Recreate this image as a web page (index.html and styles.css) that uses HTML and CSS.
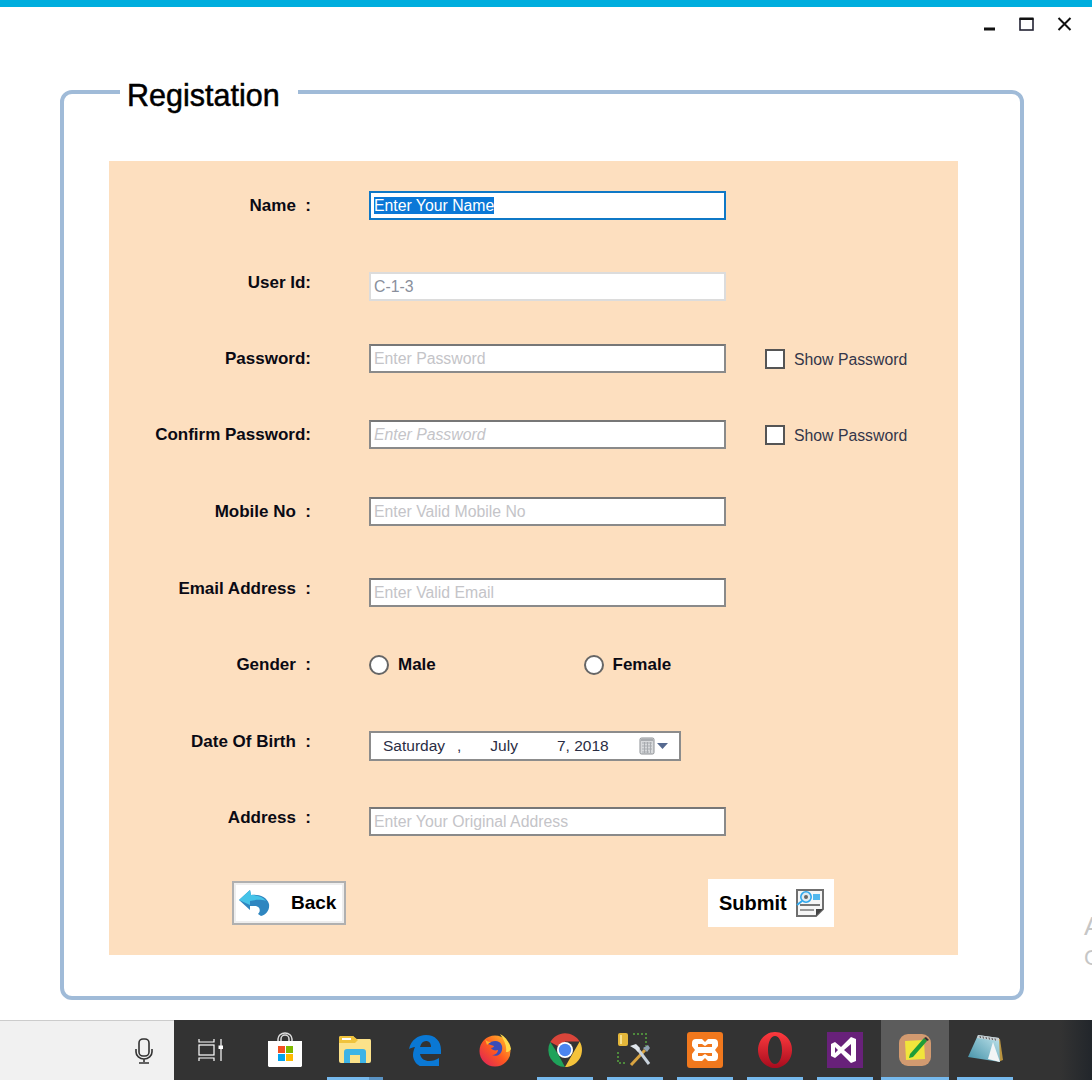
FILE: index.html
```html
<!DOCTYPE html>
<html lang="en">
<head>
<meta charset="utf-8">
<title>Registation</title>
<link rel="stylesheet" href="styles.css">
</head>
<body>
<div class="screen">
  <div class="accent"></div>
  <div class="controls">
    <svg class="ctl ctl-min" width="12" height="4" viewBox="0 0 12 4"><rect width="11" height="3" x="1" y="0.5" fill="#111"/></svg>
    <svg class="ctl ctl-max" width="15" height="14" viewBox="0 0 15 14"><rect x="1" y="2" width="13" height="11" fill="none" stroke="#223" stroke-width="1.6"/><rect x="0.5" y="0.5" width="14" height="2.5" fill="#111"/></svg>
    <svg class="ctl ctl-close" width="15" height="14" viewBox="0 0 15 14"><path d="M1.5 1 L13.5 13 M13.5 1 L1.5 13" stroke="#111" stroke-width="2" fill="none"/></svg>
  </div>
  <main class="main">
    <fieldset class="group">
      <legend class="legend">Registation</legend>
      <form class="panel">
        <div class="row">
          <div class="label">Name&nbsp; :</div>
          <div class="field field-focus"><span class="selected">Enter Your Name</span></div>
        </div>
        <div class="row row-low">
          <div class="label">User Id:</div>
          <div class="field field-disabled">C-1-3</div>
        </div>
        <div class="row">
          <div class="label">Password:</div>
          <div class="field">Enter Password</div>
          <div class="check"><span class="box"></span><span class="check-text">Show Password</span></div>
        </div>
        <div class="row">
          <div class="label">Confirm Password:</div>
          <div class="field field-italic">Enter Password</div>
          <div class="check"><span class="box"></span><span class="check-text">Show Password</span></div>
        </div>
        <div class="row">
          <div class="label">Mobile No&nbsp; :</div>
          <div class="field">Enter Valid Mobile No</div>
        </div>
        <div class="row row-low">
          <div class="label">Email Address&nbsp; :</div>
          <div class="field">Enter Valid Email</div>
        </div>
        <div class="row">
          <div class="label">Gender&nbsp; :</div>
          <div class="radios">
            <div class="radio"><span class="dot"></span><span>Male</span></div>
            <div class="radio"><span class="dot"></span><span>Female</span></div>
          </div>
        </div>
        <div class="row row-low">
          <div class="label">Date Of Birth&nbsp; :</div>
          <div class="date">
            <span class="date-day">Saturday</span>
            <span class="date-comma">,</span>
            <span class="date-month">July</span>
            <span class="date-rest">7, 2018</span>
            <svg class="cal" width="30" height="18" viewBox="0 0 30 18">
              <rect x="2" y="1" width="14" height="16" rx="1.5" fill="#d8dadc" stroke="#8d9094"/>
              <rect x="3" y="2" width="12" height="2" fill="#a9acb0"/>
              <path d="M4 6h10M4 9h10M4 12h10M4 15h7M6.5 5v11M9.5 5v11M12.5 5v11" stroke="#a5a8ad" stroke-width="0.9"/>
              <path d="M19 6h11l-5.5 6z" fill="#566a90"/>
            </svg>
          </div>
        </div>
        <div class="row row-low">
          <div class="label">Address&nbsp; :</div>
          <div class="field">Enter Your Original Address</div>
        </div>
        <div class="actions">
          <button type="button" class="btn btn-back">
            <svg width="32" height="28" viewBox="0 0 32 28">
              <path d="M1 11 L12 1 L13 6 C21 5 29 8 31 15 C32 21 28 26 23 27 L20 25 C23 22 22 18 18 17 L12 17 L12 21 Z" fill="#2f86c0"/>
              <path d="M1 11 L12 1 L13 6 C20 6 25 8 28 12 C22 10 17 11 12 12 L12 16 Z" fill="#45c3e8"/>
            </svg>
            <span>Back</span>
          </button>
          <button type="button" class="btn btn-submit">
            <span>Submit</span>
            <svg width="30" height="30" viewBox="0 0 30 30">
              <path d="M2 2 H28 V21 L21 28 H2 Z" fill="#f6f6f6" stroke="#6f6f6f" stroke-width="2"/>
              <path d="M21 28 V21 H28 Z" fill="#444"/>
              <rect x="18" y="6" width="7" height="6" fill="#52b8ee"/>
              <rect x="5" y="16" width="20" height="2" fill="#777"/>
              <rect x="5" y="21" width="14" height="2" fill="#999"/>
              <circle cx="11" cy="9" r="5.2" fill="#dfeaf0" stroke="#2fa8ee" stroke-width="1.6"/>
              <circle cx="11" cy="9" r="2" fill="#666"/>
              <path d="M7 13 L2 17" stroke="#2fa8ee" stroke-width="2"/>
            </svg>
          </button>
        </div>
      </form>
    </fieldset>
  </main>
  <div class="watermark"><div class="wm-a">A</div><div class="wm-c">C</div></div>
  <footer class="taskbar">
    <div class="tray">
      <svg width="20" height="28" viewBox="0 0 20 28"><rect x="5" y="2" width="10" height="17" rx="4" fill="none" stroke="#333" stroke-width="1.6"/><path d="M2 12v3a8 7 0 0 0 16 0v-3M10 22v3M5 26h10" fill="none" stroke="#333" stroke-width="1.6"/></svg>
    </div>
    <div class="task task-view">
      <svg width="26" height="24" viewBox="0 0 26 24"><path d="M2 1v3h15V1M2 23v-3h15v3" fill="none" stroke="#fff" stroke-width="1.2"/><rect x="2" y="7" width="15" height="10" fill="none" stroke="#fff" stroke-width="1.2"/><path d="M24 1v22" stroke="#fff" stroke-width="1.2"/><rect x="21.5" y="7.5" width="5" height="3.5" fill="#fff"/></svg>
    </div>
    <div class="task">
      <svg width="36" height="36" viewBox="0 0 36 36"><path d="M11 13V7a7 6 0 0 1 14 0v6M14 13V7a4 4 0 0 1 8 0v6" fill="none" stroke="#ddd" stroke-width="1.5"/><path d="M1 9h34v25l-1 1H2l-1-1z" fill="#fff"/><rect x="11" y="14" width="7" height="7" fill="#f25022"/><rect x="19" y="14" width="7" height="7" fill="#7fba00"/><rect x="11" y="22" width="7" height="7" fill="#00a4ef"/><rect x="19" y="22" width="7" height="7" fill="#ffb900"/></svg>
    </div>
    <div class="task task-on task-split">
      <svg width="34" height="30" viewBox="0 0 34 30"><path d="M1 3a2 2 0 0 1 2-2h12l3 3h14a2 2 0 0 1 1 2v20a2 2 0 0 1-2 2H3a2 2 0 0 1-2-2z" fill="#fce28a"/><path d="M1 8V3a2 2 0 0 1 2-2h12l5 4-3 3z" fill="#f0c33c"/><rect x="4" y="3" width="9" height="2" fill="#fff"/><path d="M6 28V17a3 3 0 0 1 3-3h16a3 3 0 0 1 3 3v11h-6v-8H12v8z" fill="#3eb4e6"/></svg>
    </div>
    <div class="task">
      <svg width="32" height="32" viewBox="0 0 32 32"><path d="M0 15C2 6 9 1 17 1c9 0 15 6 15 15v4H11c1 5 5 7 9 7 4 0 7-1 10-3v8c-3 1-7 2-11 2C10 34 4 28 4 21c0-3 1-6 2-8-2 0-4 1-6 2zM11 13h11c0-4-2-6-5-6-3 0-5 2-6 6z" fill="#0a78d4" fill-rule="evenodd"/></svg>
    </div>
    <div class="task">
      <svg width="34" height="34" viewBox="0 0 34 34"><defs><linearGradient id="fx" x1="0" y1="1" x2="1" y2="0"><stop offset="0" stop-color="#d81b60"/><stop offset=".5" stop-color="#ff5a1f"/><stop offset="1" stop-color="#ffcb2e"/></linearGradient></defs><circle cx="17" cy="18" r="15.5" fill="url(#fx)"/><path d="M22 1c6 3 10 9 11 15-1 2-3 3-5 3 1-5-1-11-6-18z" fill="#ffd94a"/><path d="M10 11c3-3 8-4 11-2 2 1 4 4 3 8-1 5-6 7-10 5 3 0 6-2 6-5-3 1-6 0-7-2 1 0 3-1 3-2-2-1-4-1-6-2z" fill="#3b4cb8"/><path d="M7 6c1 2 3 3 6 3-2 1-3 2-4 3z" fill="#ffb02e"/></svg>
    </div>
    <div class="task task-on">
      <svg width="34" height="34" viewBox="0 0 34 34"><path d="M17 17 L2.3 9 A17 17 0 0 1 31.7 8.5 L17 8.5z" fill="#d9453a"/><path d="M17 34 A17 17 0 0 1 2.3 9 L10 21z" fill="#1fa25a"/><path d="M31.7 8.5 A17 17 0 0 1 17 34 L24.5 21z" fill="#f5c33b"/><circle cx="17" cy="17" r="8" fill="#fff"/><circle cx="17" cy="17" r="6.2" fill="#4a85f0"/></svg>
    </div>
    <div class="task task-on">
      <svg width="36" height="36" viewBox="0 0 36 36"><rect x="1" y="1" width="10" height="13" rx="2" fill="#e4b73a"/><rect x="3" y="3" width="2" height="9" fill="#fff1b0" opacity=".7"/><path d="M16 2h12v0h1v12M1 20v11h9" fill="none" stroke="#4e8a3c" stroke-width="2" stroke-dasharray="2 2"/><path d="M14 33 L28 18" stroke="#d9a441" stroke-width="3"/><path d="M20 16 L32 32" stroke="#c9d3dc" stroke-width="3"/><path d="M13 14l6-2 4 4-2 4-3-3z" fill="#dfe6ec"/><path d="M26 16l5-3 2 3-3 4z" fill="#8fa2b2"/></svg>
    </div>
    <div class="task task-on">
      <svg width="36" height="36" viewBox="0 0 36 36"><rect width="36" height="36" rx="3" fill="#f1781d"/><path d="M9 7h6l3 3 3-3h6a4 4 0 0 1 4 4v3l-3 4 3 4v3a4 4 0 0 1-4 4h-6l-3-3-3 3H9a4 4 0 0 1-4-4v-3l3-4-3-4v-3a4 4 0 0 1 4-4zM11 12v3h14v-3h-4l-3 2-3-2zM11 21v3h4l3-2 3 2h4v-3z" fill="#fff" fill-rule="evenodd"/></svg>
    </div>
    <div class="task task-on">
      <svg width="34" height="36" viewBox="0 0 34 36"><defs><linearGradient id="op" x1="0" y1="0" x2="0" y2="1"><stop offset="0" stop-color="#ff3a3e"/><stop offset="1" stop-color="#a70c1e"/></linearGradient></defs><path fill-rule="evenodd" d="M17 0a17 18 0 1 0 .01 0zM17 4c-4 0-7 6-7 14s3 14 7 14 7-6 7-14-3-14-7-14z" fill="url(#op)"/></svg>
    </div>
    <div class="task task-on">
      <svg width="36" height="36" viewBox="0 0 36 36"><rect width="36" height="36" fill="#68217a"/><path d="M24 5 L29 7 V29 L24 31 L14 21 L8 26 L4 24 V12 L8 10 L14 15z M24 12 L17 18 L24 24z M8 15 V21 L11 18z" fill="#fff" fill-rule="evenodd"/></svg>
    </div>
    <div class="task task-on task-active">
      <svg width="32" height="32" viewBox="0 0 32 32"><rect width="32" height="32" rx="9" fill="#d29a70"/><path d="M6 7l19-1 1 19-19 1z" fill="#f1e53c"/><path d="M11 20L25 4l3 3-14 16-4 1z" fill="#1f9d38"/><path d="M25 4l2-1 3 3-2 1z" fill="#333"/></svg>
    </div>
    <div class="task task-on">
      <svg width="36" height="32" viewBox="0 0 36 32"><defs><linearGradient id="np" x1="0" y1="1" x2="1" y2="0"><stop offset="0" stop-color="#3f8fa6"/><stop offset="1" stop-color="#c4e6ee"/></linearGradient></defs><path d="M14 2l19 3 3 21-5 2z" fill="#b9933f"/><path d="M11 1l21 3 1 24-32-5z" fill="url(#np)"/><path d="M11 1l21 3v3L10 4z" fill="#c9cfd3"/><path d="M26 8l7 20-12-3z" fill="#f2f5f6"/><path d="M13 2l.5 2M16 2.5l.5 2M19 3l.5 2M22 3.500l.5 2M25 4l.5 2M28 4.500l.5 2" stroke="#555" stroke-width="1"/></svg>
    </div>
  </footer>
</div>
</body>
</html>
```

FILE: styles.css
```css
* { box-sizing: border-box; }
html, body { margin: 0; padding: 0; }
body { background: #fff; font-family: "Liberation Sans", Arial, sans-serif; }

.screen {
  position: relative;
  width: 1092px;
  height: 1080px;
  display: flex;
  flex-direction: column;
  overflow: hidden;
}
.accent { height: 7px; background: #00aede; flex: none; }
.controls {
  height: 64px;
  flex: none;
  display: flex;
  justify-content: flex-end;
  align-items: flex-start;
  padding: 10px 20px 0 0;
}
.ctl-min { margin: 10px 24px 0 0; }
.ctl-max { margin-right: 23px; }

.main { flex: 1; padding-left: 60px; }
.group {
  width: 964px;
  height: 929px;
  margin: 0;
  padding: 0 0 0 45px;
  border: 4px solid #a0bbd8;
  border-radius: 12px;
  min-width: 0;
}
.legend {
  margin-left: 11px;
  width: 178px;
  padding: 6px 0 0 7px;
  font-size: 30.5px;
  line-height: 36px;
  font-weight: 400;
  color: #000;
  -webkit-text-stroke: 0.5px #000;
  white-space: nowrap;
}
.panel {
  width: 849px;
  height: 794px;
  margin-top: 48px;
  padding-top: 29px;
  background: #fddfbf;
  display: grid;
  grid-template-rows: 77px 76px 76px 77px 77px 76px 77px 76px 77px auto;
  align-content: start;
}

.row {
  display: grid;
  grid-template-columns: 202px 357px auto;
  column-gap: 58px;
  align-items: start;
  height: 40px;
}
.label {
  height: 32px;
  line-height: 32px;
  text-align: right;
  font-size: 17px;
  font-weight: 700;
  color: #0a0a14;
  white-space: nowrap;
}
.field {
  height: 29px;
  margin-top: 1px;
  padding-left: 3px;
  line-height: 26px;
  border: 2px solid #8a8a8a;
  border-top-color: #777;
  background: #fff;
  font-size: 15.8px;
  color: #c4c4c8;
  white-space: nowrap;
}
.row-low .field, .row-low .date { margin-top: 5px; }
.field-focus { border-color: #0f78c6; }
.field-disabled { border-color: #dcdcdc; color: #8a8f9c; }
.field-italic { font-style: italic; }
.selected { background: #0a78d7; color: #fff; }

.check {
  display: flex;
  align-items: center;
  gap: 9px;
  height: 29px;
  margin: 1px 0 0 -19px;
  font-size: 15.8px;
  color: #33364a;
  white-space: nowrap;
}
.check-text { padding-top: 3px; }
.box {
  width: 20px;
  height: 20px;
  border: 2px solid #555;
  background: #fff;
}

.radios { display: flex; height: 32px; align-items: center; }
.radio {
  flex: none;
  display: flex;
  align-items: center;
  gap: 9px;
  width: 214.5px;
  font-size: 17px;
  font-weight: 700;
  color: #0a0a14;
}
.dot {
  width: 20px;
  height: 20px;
  border: 2px solid #666;
  border-radius: 50%;
  background: #fff;
}

.date {
  position: relative;
  width: 312px;
  height: 30px;
  border: 2px solid #8c8c8c;
  background: #fff;
  display: flex;
  align-items: center;
  font-size: 15.5px;
  color: #2a2d44;
  white-space: nowrap;
}
.date-day { margin-left: 12px; }
.date-comma { margin-left: 12px; }
.date-month { margin-left: 29px; }
.date-rest { margin-left: 39px; }
.cal { margin-left: 29px; }

.actions {
  display: flex;
  justify-content: space-between;
  align-items: center;
  height: 48px;
  padding: 0 124px 0 123px;
}
.btn {
  display: flex;
  align-items: center;
  border: 0;
  background: #fff;
  font-family: inherit;
  font-size: 19px;
  font-weight: 700;
  color: #000;
  padding: 0;
}
.btn-back {
  width: 114px;
  height: 44px;
  border: 2px solid #b0b0b0;
  box-shadow: inset 0 0 0 2px #eeeeee;
  padding-left: 4px;
  gap: 21px;
}
.btn-submit {
  width: 126px;
  height: 48px;
  padding-left: 11px;
  gap: 8px;
  font-size: 20px;
}

.watermark {
  position: absolute;
  left: 1084px;
  top: 908px;
  color: #c6c6c6;
}
.wm-a { font-size: 26px; line-height: 36px; }
.wm-c { font-size: 22px; line-height: 28px; }

.taskbar {
  flex: none;
  height: 60px;
  display: flex;
  background: linear-gradient(90deg, #333 0, #333 1060px, #22262b 1092px);
}
.tray {
  width: 174px;
  padding-left: 134px;
  display: flex;
  align-items: center;
  background: #f1f1f1;
  border-top: 1px solid #ccc;
}
.task {
  width: 70px;
  display: flex;
  align-items: center;
  justify-content: center;
  position: relative;
}
.task-view { width: 76px; padding-right: 5px; }
.task-on::after {
  content: "";
  position: absolute;
  left: 7px;
  right: 7px;
  bottom: 0;
  height: 3px;
  background: #76b9ed;
}
.task-split::before {
  content: "";
  position: absolute;
  left: 49px;
  width: 14px;
  bottom: 0;
  height: 3px;
  background: #5a93c4;
  z-index: 1;
}
.task-active { background: #5c5c5c; margin-left: 1px; width: 68px; margin-right: 1px; }
.task-active::after { left: 0; right: 0; }
```
